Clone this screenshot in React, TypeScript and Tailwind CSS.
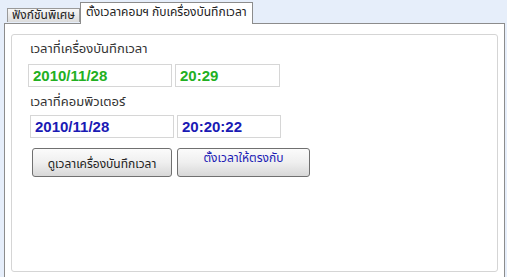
const thai = "font-['Tahoma','Noto_Sans_Thai','Loma','Garuda','Noto_Sans',sans-serif]";

export default function App() {
  return (
    <div className={`w-[507px] h-[277px] overflow-hidden bg-[#e6eefa] ${thai}`}>
      {/* tab strip */}
      <div className="flex items-end h-[23px] pl-[7px]">
        <div className="h-[14px] w-[73px] mb-px border border-b-0 border-[#9a9a9a] bg-gradient-to-b from-[#f7f7f7] to-[#dcdcdc] text-[12px] leading-[13px] text-[#222] flex justify-center">
          ฟังก์ชันพิเศษ
        </div>
        <div className="relative z-10 h-[22px] w-[173px] border border-b-0 border-[#8c8c8c] bg-white text-[12px] leading-[18px] text-[#222] pl-[5px] -mb-px">
          ตั้งเวลาคอมฯ กับเครื่องบันทึกเวลา
        </div>
      </div>

      {/* tab panel */}
      <div className="ml-[4px] w-[501px] h-[260px] border border-b-0 border-[#8c8c8c] bg-white pt-[10px] pl-[6px]">
        <div className="w-[487px] h-[238px] rounded-[3px] border border-[#d5d5d5] flex flex-col">
          <div className="mt-[6px] ml-[18px] h-[17px] text-[13px] leading-[17px] text-[#333]">
            เวลาที่เครื่องบันทึกเวลา
          </div>
          <div className="mt-[6px] ml-[16px] flex gap-[3px]">
            <TimeBox w="w-[144px]" color="text-[#22b022]" value="2010/11/28" />
            <TimeBox w="w-[105px]" color="text-[#22b022]" value="20:29" />
          </div>
          <div className="mt-[7px] ml-[18px] h-[17px] text-[13px] leading-[17px] text-[#333]">
            เวลาที่คอมพิวเตอร์
          </div>
          <div className="mt-[4px] ml-[18px] flex gap-[3px]">
            <TimeBox w="w-[144px]" color="text-[#1a1ab4]" value="2010/11/28" />
            <TimeBox w="w-[104px]" color="text-[#1a1ab4]" value="20:20:22" />
          </div>
          <div className="mt-[10px] ml-[20px] flex gap-[5px]">
            <button className="w-[140px] h-[29px] rounded-[3px] border border-[#707070] bg-gradient-to-b from-[#fbfbfb] via-[#efefef] to-[#d8d8d8] text-[12px] leading-[14px] text-[#222] flex items-end justify-center pb-[5px]">
              ดูเวลาเครื่องบันทึกเวลา
            </button>
            <button className="w-[133px] h-[29px] rounded-[3px] border border-[#707070] bg-gradient-to-b from-[#fbfbfb] via-[#efefef] to-[#d8d8d8] text-[12px] leading-[14px] text-[#1a1ab4] flex items-start justify-center pt-[2px]">
              ตั้งเวลาให้ตรงกับ
            </button>
          </div>
        </div>
      </div>
    </div>
  );
}

function TimeBox({ w, color, value }: { w: string; color: string; value: string }) {
  return (
    <div
      className={`${w} h-[23px] border border-[#d6d6d6] bg-white pl-[4px] font-['Liberation_Sans',Arial,sans-serif] font-bold text-[15px] leading-[21px] ${color}`}
    >
      {value}
    </div>
  );
}
